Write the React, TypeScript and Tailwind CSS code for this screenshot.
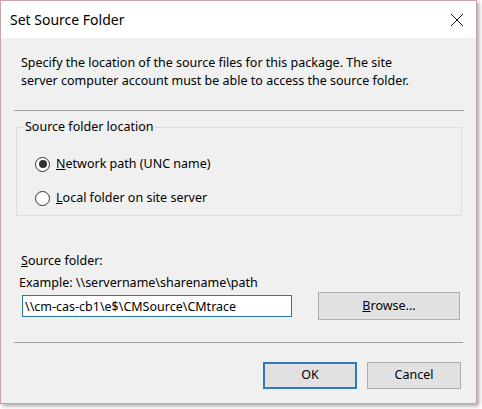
import { useState } from 'react';

const font = "font-['Noto_Sans','Liberation_Sans',sans-serif]";

function Radio({ checked, onSelect, children }: { checked: boolean; onSelect: () => void; children: React.ReactNode }) {
  return (
    <button type="button" onClick={onSelect} className="flex items-center h-[20px] text-left">
      <span className="w-[15px] h-[15px] rounded-full border border-[#333] bg-white flex items-center justify-center shrink-0">
        {checked && <span className="w-[8px] h-[8px] rounded-full bg-[#333]" />}
      </span>
      <span className="ml-[6px] text-[12.5px] text-black">{children}</span>
    </button>
  );
}

function DialogButton({ primary, children }: { primary?: boolean; children: React.ReactNode }) {
  return (
    <button
      type="button"
      className={
        primary
          ? 'w-[94px] h-[27px] bg-[#e1e1e1] border-2 border-[#2f7ab8] text-[12.5px] text-black'
          : 'w-[94px] h-[27px] bg-[#e1e1e1] border border-[#adadad] text-[12.5px] text-black'
      }
    >
      {children}
    </button>
  );
}

export default function App() {
  const [mode, setMode] = useState<'unc' | 'local'>('unc');
  const [path, setPath] = useState('\\\\cm-cas-cb1\\e$\\CMSource\\CMtrace');

  return (
    <div className={`w-[482px] h-[409px] bg-white ${font}`}>
      <div className="w-[477px] h-[404px] border border-[#c9a3a9] bg-[#f0f0f0] shadow-[2px_2px_4px_rgba(0,0,0,0.35)] flex flex-col">
        {/* title bar */}
        <div className="h-[37px] bg-white flex items-center justify-between pl-[9px] pr-[12px] shrink-0">
          <span className="text-[14px] text-black">Set Source Folder</span>
          <svg width="14" height="14" viewBox="0 0 14 14" className="mt-[1px]">
            <path d="M1 1 L13 13 M13 1 L1 13" stroke="#111" strokeWidth="1" />
          </svg>
        </div>

        <div className="flex flex-col px-[13px] pt-[16px] pb-[14px] text-[12.5px] text-black">
          <p className="pl-[7px] leading-[18px]">
            Specify the location of the source files for this package. The site
            <br />
            server computer account must be able to access the source folder.
          </p>

          <div className="mt-[20px] h-px bg-[#a0a0a0] mr-[-1px]" />

          {/* source folder location group */}
          <div className="relative mt-[16px] ml-[2px] mr-[1px] border border-[#dcdcdc] pl-[18px] pt-[26px] pb-[7px] flex flex-col gap-[14px]">
            <span className="absolute left-[7px] top-[-10px] px-[1px] bg-[#f0f0f0] leading-[18px]">
              Source folder location
            </span>
            <Radio checked={mode === 'unc'} onSelect={() => setMode('unc')}>
              <u>N</u>etwork path (UNC name)
            </Radio>
            <Radio checked={mode === 'local'} onSelect={() => setMode('local')}>
              <u>L</u>ocal folder on site server
            </Radio>
          </div>

          <div className="mt-[36px] pl-[7px] leading-[18px]">
            <u>S</u>ource folder:
          </div>
          <div className="mt-[4px] pl-[5px] leading-[18px]">Example: \\servername\sharename\path</div>

          <div className="mt-0 flex items-center">
            <input
              value={path}
              onChange={(e) => setPath(e.target.value)}
              className="ml-[8px] w-[270px] h-[22px] border border-[#2a78a8] bg-white px-[2px] text-[12.5px] outline-none"
            />
            <button
              type="button"
              className="ml-[26px] w-[142px] h-[28px] bg-[#e1e1e1] border border-[#adadad] text-[12.5px]"
            >
              <u>B</u>rowse...
            </button>
          </div>

          <div className="mt-[22px] h-px bg-[#a0a0a0]" />

          <div className="mt-[19px] flex justify-end gap-[10px] pr-[2px]">
            <DialogButton primary>OK</DialogButton>
            <DialogButton>Cancel</DialogButton>
          </div>
        </div>
      </div>
    </div>
  );
}
